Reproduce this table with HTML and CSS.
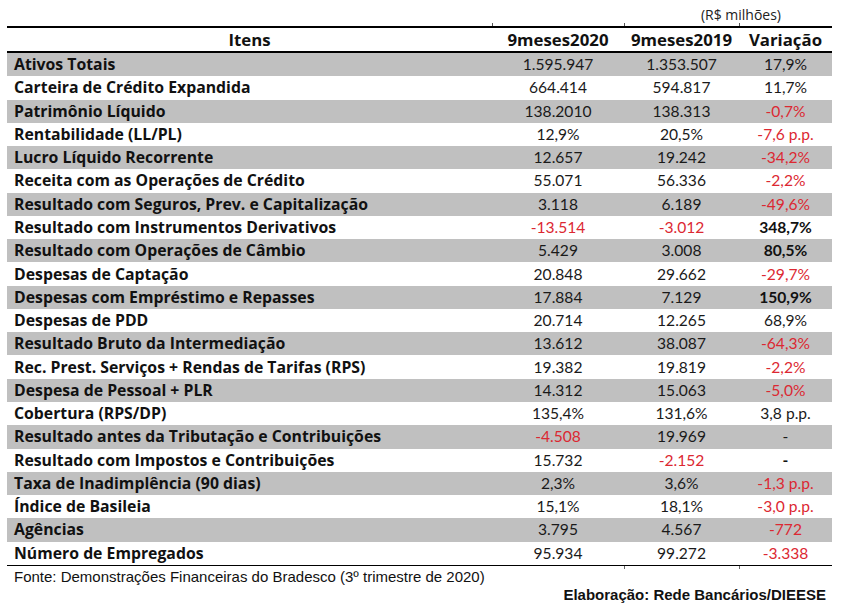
FILE: index.html
```html
<!DOCTYPE html>
<html lang="pt-BR">
<head>
<meta charset="utf-8">
<title>Bradesco 9 meses 2020</title>
<link rel="stylesheet" href="styles.css">
</head>
<body>
<div class="page">
  <div class="unit">(R$ milhões)</div>
  <table class="tbl">
    <colgroup>
      <col class="c1"><col class="c2"><col class="c3"><col class="c4">
    </colgroup>
    <thead>
      <tr><th>Itens</th><th class="tick">9meses2020</th><th class="tick">9meses2019</th><th class="tick">Variação</th></tr>
    </thead>
    <tbody>
      <tr class="g"><td>Ativos Totais</td><td>1.595.947</td><td>1.353.507</td><td>17,9%</td></tr>
      <tr><td>Carteira de Crédito Expandida</td><td>664.414</td><td>594.817</td><td>11,7%</td></tr>
      <tr class="g"><td>Patrimônio Líquido</td><td>138.2010</td><td>138.313</td><td class="r">-0,7%</td></tr>
      <tr><td>Rentabilidade (LL/PL)</td><td>12,9%</td><td>20,5%</td><td class="r">-7,6 p.p.</td></tr>
      <tr class="g"><td>Lucro Líquido Recorrente</td><td>12.657</td><td>19.242</td><td class="r">-34,2%</td></tr>
      <tr><td>Receita com as Operações de Crédito</td><td>55.071</td><td>56.336</td><td class="r">-2,2%</td></tr>
      <tr class="g"><td>Resultado com Seguros, Prev. e Capitalização</td><td>3.118</td><td>6.189</td><td class="r">-49,6%</td></tr>
      <tr><td>Resultado com Instrumentos Derivativos</td><td class="r">-13.514</td><td class="r">-3.012</td><td class="b">348,7%</td></tr>
      <tr class="g"><td>Resultado com Operações de Câmbio</td><td>5.429</td><td>3.008</td><td class="b">80,5%</td></tr>
      <tr><td>Despesas de Captação</td><td>20.848</td><td>29.662</td><td class="r">-29,7%</td></tr>
      <tr class="g"><td>Despesas com Empréstimo e Repasses</td><td>17.884</td><td>7.129</td><td class="b">150,9%</td></tr>
      <tr><td>Despesas de PDD</td><td>20.714</td><td>12.265</td><td>68,9%</td></tr>
      <tr class="g"><td>Resultado Bruto da Intermediação</td><td>13.612</td><td>38.087</td><td class="r">-64,3%</td></tr>
      <tr><td>Rec. Prest. Serviços + Rendas de Tarifas (RPS)</td><td>19.382</td><td>19.819</td><td class="r">-2,2%</td></tr>
      <tr class="g"><td>Despesa de Pessoal + PLR</td><td>14.312</td><td>15.063</td><td class="r">-5,0%</td></tr>
      <tr><td>Cobertura (RPS/DP)</td><td>135,4%</td><td>131,6%</td><td>3,8 p.p.</td></tr>
      <tr class="g"><td>Resultado antes da Tributação e Contribuições</td><td class="r">-4.508</td><td>19.969</td><td>-</td></tr>
      <tr><td>Resultado com Impostos e Contribuições</td><td>15.732</td><td class="r">-2.152</td><td class="b">-</td></tr>
      <tr class="g"><td>Taxa de Inadimplência (90 dias)</td><td>2,3%</td><td>3,6%</td><td class="r">-1,3 p.p.</td></tr>
      <tr><td>Índice de Basileia</td><td>15,1%</td><td>18,1%</td><td class="r">-3,0 p.p.</td></tr>
      <tr class="g"><td>Agências</td><td>3.795</td><td>4.567</td><td class="r">-772</td></tr>
      <tr><td>Número de Empregados</td><td>95.934</td><td class="tickb">99.272</td><td class="r tickb">-3.338</td></tr>
    </tbody>
  </table>
  <div class="source">Fonte: Demonstrações Financeiras do Bradesco (3º trimestre de 2020)</div>
  <div class="credit">Elaboração: Rede Bancários/DIEESE</div>
</div>
</body>
</html>
```
FILE: styles.css
```css
html, body {
  margin: 0;
  padding: 0;
  background: #ffffff;
}
.page {
  width: 825px;
  margin-left: 7px;
  font-family: Lato, "Open Sans", sans-serif;
  color: #111;
}
.unit {
  height: 26px;
  box-sizing: border-box;
  padding: 6px 51px 0 0;
  text-align: right;
  font-family: "Open Sans", Lato, sans-serif;
  font-size: 14px;
  line-height: 17px;
  color: #222;
}
.tbl {
  width: 825px;
  border-collapse: collapse;
  table-layout: fixed;
  border-top: 2px solid #000;
  border-bottom: 1px solid #000;
}
.c1 { width: 485px; }
.c2 { width: 132px; }
.c3 { width: 115px; }
.c4 { width: 93px; }
.tbl th {
  position: relative;
  height: 23px;
  padding: 0;
  font-family: "Open Sans", Lato, sans-serif;
  font-size: 16.8px;
  font-weight: bold;
  text-align: center;
  border-bottom: 2px solid #000;
  line-height: 23px;
}
.tbl th.tick::before {
  content: "";
  position: absolute;
  left: 0;
  top: -5px;
  width: 1px;
  height: 3px;
  background: #555;
}
.tbl td {
  position: relative;
  height: 23.27px;
  padding: 0;
  font-size: 15.6px;
  line-height: 23px;
  text-align: center;
  white-space: nowrap;
  color: #1a1a1a;
}
.tbl td.tickb::after {
  content: "";
  position: absolute;
  left: 0;
  bottom: -4px;
  width: 1px;
  height: 3px;
  background: #666;
}
.tbl td:first-child {
  text-align: left;
  padding-left: 7px;
  font-family: "Open Sans", Lato, sans-serif;
  font-size: 15.8px;
  font-weight: bold;
  color: #111;
}
.tbl tr.g td {
  background: #c0c0c0;
}
.tbl td.r { color: #dc2832; }
.tbl td.b { font-weight: bold; color: #111; }
.source {
  font-family: "Liberation Sans", Arial, sans-serif;
  font-size: 15px;
  line-height: 17px;
  padding: 2px 0 0 7px;
  color: #111;
}
.credit {
  font-family: "Liberation Sans", Arial, sans-serif;
  font-size: 15px;
  font-weight: bold;
  line-height: 17px;
  text-align: right;
  padding: 1px 6px 0 0;
  color: #111;
}
```
